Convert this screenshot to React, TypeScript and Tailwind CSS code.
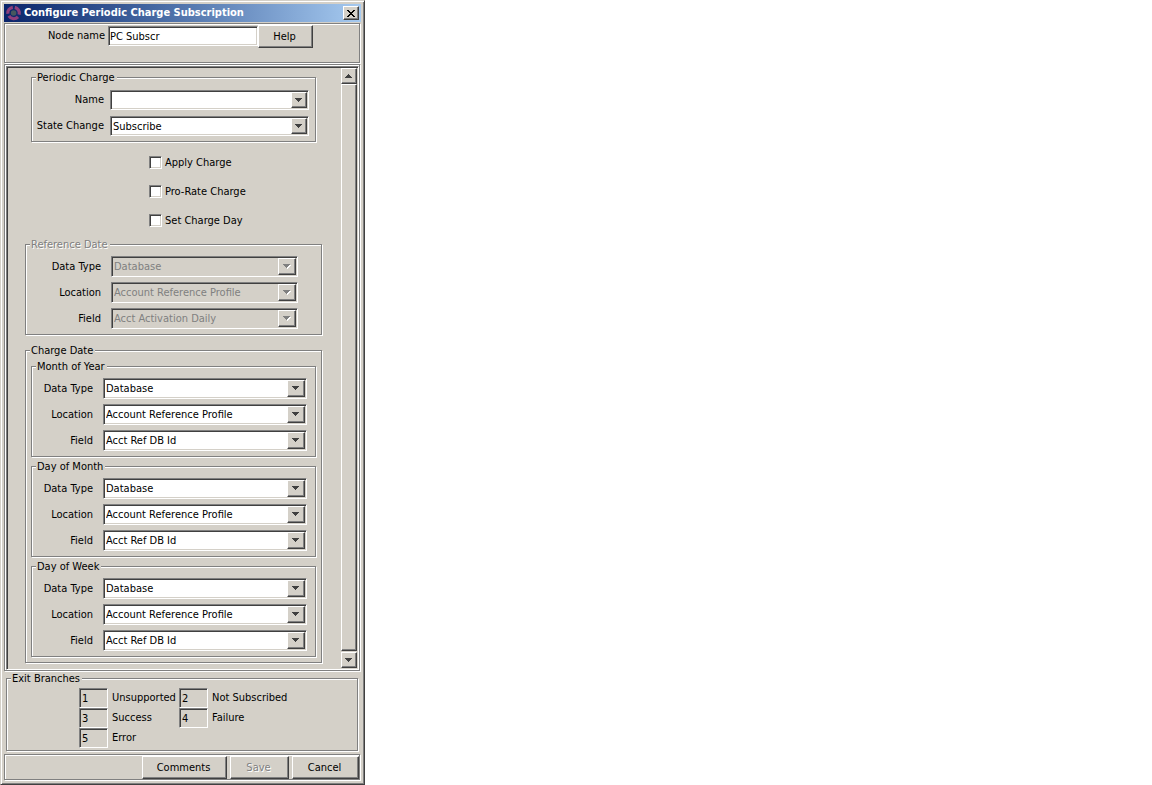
import { useId, useState } from "react";
import type { ReactNode } from "react";
import clsx from "clsx";

const etched = "border border-[#808080] shadow-[inset_1px_1px_0_#fff,1px_1px_0_#fff]";
const sunken =
    "border border-t-[#808080] border-l-[#808080] border-r-white border-b-white shadow-[inset_1px_1px_0_#404040,inset_-1px_-1px_0_#d4d0c8]";
const raised =
    "border border-t-white border-l-white border-r-[#404040] border-b-[#404040] bg-[#d4d0c8] shadow-[inset_-1px_-1px_0_#808080]";

function Arrow({ up, disabled }: { up?: boolean; disabled?: boolean }) {
    const d = up ? "M3 0h1v1h1v1h1v1h1v1H0V3h1V2h1V1h1z" : "M0 0h7v1H6v1H5v1H4v1H3V3H2V2H1V1H0z";
    return (
        <svg width="8" height="5" viewBox="0 0 8 5" shapeRendering="crispEdges" aria-hidden="true">
            {disabled && <path d={d} fill="#fff" transform="translate(1 1)" />}
            <path d={d} fill={disabled ? "#808080" : "#404040"} />
        </svg>
    );
}

function Group({ title, disabled, className, bodyClass, children }: { title: string; disabled?: boolean; className?: string; bodyClass: string; children: ReactNode }) {
    return (
        <fieldset disabled={disabled} className={clsx("min-w-0", etched, className)}>
            <legend
                className={clsx(
                    "ml-1 bg-[#d4d0c8] pt-px pr-0.5 pl-px leading-3",
                    disabled && "text-[#808080] [text-shadow:1px_1px_0_#fff]"
                )}
            >
                {title}
            </legend>
            <div className={bodyClass}>{children}</div>
        </fieldset>
    );
}

type FieldProps = {
    label: string;
    value: string;
    small?: boolean;
    disabled?: boolean;
    labelClass: string;
};

function SelectField({ label, value, small, disabled, labelClass }: FieldProps) {
    const id = useId();
    return (
        <div className="flex items-center">
            <label htmlFor={id} className={clsx("shrink-0 text-right", labelClass)}>
                {label}
            </label>
            <div className="relative min-w-0 flex-1">
                <select
                    id={id}
                    defaultValue={value}
                    disabled={disabled}
                    className={clsx(
                        "block w-full appearance-none rounded-none pt-px pr-5 pl-0.5 outline-none",
                        sunken,
                        small ? "h-5" : "h-[21px]",
                        disabled ? "bg-[#d4d0c8] text-[#808080] opacity-100" : "bg-white text-black"
                    )}
                >
                    <option value={value}>{value}</option>
                </select>
                <span
                    className={clsx(
                        "pointer-events-none absolute top-0.5 right-0.5 bottom-0.5 flex items-center justify-center",
                        raised,
                        small ? "w-4" : "w-[18px]"
                    )}
                >
                    <Arrow disabled={disabled} />
                </span>
            </div>
        </div>
    );
}

function DatabaseFields({ field, disabled, labelClass }: { field: string; disabled?: boolean; labelClass: string }) {
    return (
        <div className="flex flex-col gap-[5px]">
            <SelectField label="Data Type" value="Database" disabled={disabled} labelClass={labelClass} />
            <SelectField label="Location" value="Account Reference Profile" disabled={disabled} labelClass={labelClass} />
            <SelectField label="Field" value={field} disabled={disabled} labelClass={labelClass} />
        </div>
    );
}

function PushButton({ disabled, className, children }: { disabled?: boolean; className?: string; children: ReactNode }) {
    return (
        <button
            type="button"
            disabled={disabled}
            className={clsx("h-[23px] pr-0.5", raised, disabled && "text-[#808080] [text-shadow:1px_1px_0_#fff]", className)}
        >
            {children}
        </button>
    );
}

function AppIcon() {
    return (
        <svg width="16" height="16" viewBox="0 0 16 16" fill="none" aria-hidden="true">
            <g stroke="#8f3f7c" strokeWidth="3.2">
                <path d="M1.9 8.8A5.7 5.7 0 0 1 6.8 2.4" />
                <path d="M8.8 2.4A5.7 5.7 0 0 1 13.1 9.6" />
                <path d="M12 11.9A5.7 5.7 0 0 1 2.9 10.9" />
            </g>
            <circle cx="7.6" cy="8" r="2.8" fill="#46585e" />
        </svg>
    );
}

const checks = ["Apply Charge", "Pro-Rate Charge", "Set Charge Day"];
const chargeDates = ["Month of Year", "Day of Month", "Day of Week"];
const branches = [
    ["1", "Unsupported"],
    ["2", "Not Subscribed"],
    ["3", "Success"],
    ["4", "Failure"],
    ["5", "Error"],
];

export default function App() {
    const [nodeName, setNodeName] = useState("PC Subscr");

    return (
        <main className="w-full max-w-[365px] border border-t-[#d4d0c8] border-l-[#d4d0c8] border-r-[#404040] border-b-[#404040] bg-[#d4d0c8] p-[3px] pb-1 font-['DejaVu_Sans_Condensed','DejaVu_Sans',sans-serif] text-[11px] leading-[14px] text-black shadow-[inset_1px_1px_0_#fff,inset_-1px_-1px_0_#808080]">
            {/* Title bar */}
            <header className="flex h-[18px] items-center bg-linear-to-r from-[#0a246a] to-[#a6caf0] pr-0.5 pl-0.5">
                <AppIcon />
                <h1 className="ml-0.5 flex-1 truncate font-bold text-white">Configure Periodic Charge Subscription</h1>
                <button type="button" aria-label="Close" className={clsx("flex h-[14px] w-4 items-center justify-center", raised)}>
                    <svg width="8" height="7" viewBox="0 0 8 7" shapeRendering="crispEdges" aria-hidden="true">
                        <path d="M0 0h2v1h1v1h2V1h1V0h2v1H7v1H6v1H5v1h1v1h1v1h1v1H6V6H5V5H3v1H2v1H0V6h1V5h1V4h1V3H2V2H1V1H0z" fill="#000" />
                    </svg>
                </button>
            </header>

            <section className={clsx("mt-px mr-px flex h-10 items-start pt-px", etched)}>
                <label htmlFor="node-name" className="mt-1 w-[100px] text-right">
                    Node name
                </label>
                <input
                    id="node-name"
                    value={nodeName}
                    onChange={(e) => setNodeName(e.target.value)}
                    className={clsx("mt-px ml-[3px] h-5 w-[150px] bg-white px-px outline-none", sunken)}
                />
                <PushButton className="w-[55px]">Help</PushButton>
            </section>

            <section className={clsx("mt-px mr-px pt-px pl-px", etched)}>
                <div className={clsx("flex p-px", sunken)}>
                    <div className="min-w-0 flex-1 pt-[3px] pr-[19px] pb-[5px] pl-[17px]">
                        <Group title="Periodic Charge" className="mx-1.5" bodyClass="flex flex-col gap-1.5 pt-1.5 pr-1.5 pb-[5px]">
                            <SelectField label="Name" value="" small labelClass="w-[72px] mr-1.5" />
                            <SelectField label="State Change" value="Subscribe" small labelClass="w-[72px] mr-1.5" />
                        </Group>

                        <div className="mt-[14px] ml-[124px] flex flex-col items-start gap-4">
                            {checks.map((name) => (
                                <label key={name} className="flex h-[13px] items-center gap-[3px]">
                                    <input type="checkbox" className={clsx("h-[13px] w-[13px] appearance-none bg-white checked:bg-[#404040]", sunken)} />
                                    {name}
                                </label>
                            ))}
                        </div>

                        <Group title="Reference Date" disabled className="mt-[11px]" bodyClass="pt-[5px] pr-[23px] pb-[5px]">
                            <DatabaseFields field="Acct Activation Daily" disabled labelClass="w-[75px] mr-2.5" />
                        </Group>

                        <Group title="Charge Date" className="mt-[9px]" bodyClass="flex flex-col gap-[3px] px-[5px] pt-[3px] pb-[5px]">
                            {chargeDates.map((title) => (
                                <Group key={title} title={title} bodyClass="pt-[5px] pr-2 pb-[5px]">
                                    <DatabaseFields field="Acct Ref DB Id" labelClass="w-[61px] mr-2.5" />
                                </Group>
                            ))}
                        </Group>
                    </div>

                    {/* Scroll bar */}
                    <div className="flex w-4 flex-col">
                        <button type="button" aria-label="Scroll up" className={clsx("flex h-4 items-center justify-center", raised)}>
                            <Arrow up />
                        </button>
                        <div className={clsx("flex-1", raised)} />
                        <button type="button" aria-label="Scroll down" className={clsx("mt-px flex h-4 items-center justify-center", raised)}>
                            <Arrow />
                        </button>
                    </div>
                </div>
            </section>

            <Group title="Exit Branches" className="mt-px mr-[3px] ml-0.5" bodyClass="grid grid-cols-[100px_1fr] pt-[3px] pb-0.5 pl-[72px]">
                {branches.map(([number, name]) => (
                    <label key={number} className="flex flex-row-reverse items-center justify-end gap-1">
                        {name}
                        <input readOnly value={number} className={clsx("h-5 w-[29px] bg-[#d4d0c8] px-0.5 outline-none", sunken)} />
                    </label>
                ))}
            </Group>

            <footer className={clsx("mt-[3px] mr-px flex justify-end gap-[3px] pt-px", etched)}>
                <PushButton className="w-[85px]">Comments</PushButton>
                <PushButton disabled className="w-[59px]">
                    Save
                </PushButton>
                <PushButton className="w-[67px]">Cancel</PushButton>
            </footer>
        </main>
    );
}
